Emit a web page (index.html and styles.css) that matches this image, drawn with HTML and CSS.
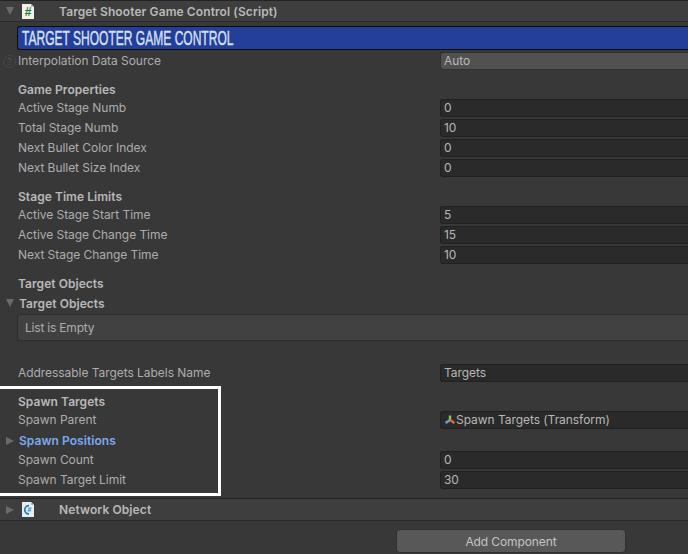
FILE: index.html
```html
<!DOCTYPE html>
<html lang="en">
<head>
  <meta charset="UTF-8">
  <title>Inspector</title>
  <link rel="stylesheet" href="styles.css">
</head>
<body>
  <div class="inspector">
    <div class="comp-header">
      <span class="tri tri-down"></span>
      <svg class="comp-icon" width="14" height="15" viewBox="0 0 14 15">
        <path d="M1 0h9l3 3v12H1z" fill="#f1f1ec"/>
        <path d="M10 0l3 3h-3z" fill="#b9b9b4"/>
        <text x="7" y="12" text-anchor="middle" class="icon-hash">#</text>
      </svg>
      <span class="comp-title">Target Shooter Game Control (Script)</span>
    </div>

    <div class="banner"><span class="banner-text">TARGET SHOOTER GAME CONTROL</span></div>

    <div class="row row-help">
      <span class="help">?</span>
      <span class="label">Interpolation Data Source</span>
      <span class="field field-drop">Auto</span>
    </div>

    <h3 class="heading">Game Properties</h3>
    <div class="row"><span class="label">Active Stage Numb</span><span class="field">0</span></div>
    <div class="row"><span class="label">Total Stage Numb</span><span class="field">10</span></div>
    <div class="row"><span class="label">Next Bullet Color Index</span><span class="field">0</span></div>
    <div class="row"><span class="label">Next Bullet Size Index</span><span class="field">0</span></div>

    <h3 class="heading">Stage Time Limits</h3>
    <div class="row"><span class="label">Active Stage Start Time</span><span class="field">5</span></div>
    <div class="row"><span class="label">Active Stage Change Time</span><span class="field">15</span></div>
    <div class="row"><span class="label">Next Stage Change Time</span><span class="field">10</span></div>

    <h3 class="heading">Target Objects</h3>
    <div class="foldout foldout-list">
      <span class="tri tri-down"></span>
      <span>Target Objects</span>
    </div>
    <div class="list-box">List is Empty</div>

    <div class="row row-address"><span class="label">Addressable Targets Labels Name</span><span class="field">Targets</span></div>

    <h3 class="heading">Spawn Targets</h3>
    <div class="row">
      <span class="label">Spawn Parent</span>
      <span class="field field-object">
        <svg width="12" height="12" viewBox="0 0 12 12">
          <path d="M6 1.5V6" stroke="#8fc63f" stroke-width="2.4"/>
          <path d="M6 6L1.6 9" stroke="#5aa9dc" stroke-width="2.4"/>
          <path d="M6 6l4.4 3" stroke="#e4683a" stroke-width="2.4"/>
        </svg>Spawn Targets (Transform)
      </span>
    </div>
    <div class="foldout foldout-link">
      <span class="tri tri-right"></span>
      <span>Spawn Positions</span>
    </div>
    <div class="row"><span class="label">Spawn Count</span><span class="field">0</span></div>
    <div class="row"><span class="label">Spawn Target Limit</span><span class="field">30</span></div>

    <div class="comp-header comp-header-net">
      <span class="tri tri-right"></span>
      <svg class="comp-icon" width="14" height="15" viewBox="0 0 14 15">
        <path d="M1 0h9l3 3v12H1z" fill="#e9edf0"/>
        <path d="M10 0l3 3h-3z" fill="#b9b9b4"/>
        <path d="M8 3.6A4.2 4.2 0 1 0 8 12" fill="none" stroke="#1f7fc0" stroke-width="1.8"/>
        <text x="8.4" y="10.4" text-anchor="middle" class="icon-sharp">#</text>
      </svg>
      <span class="comp-title">Network Object</span>
    </div>

    <div class="actions">
      <button class="add-btn">Add Component</button>
    </div>

    <div class="callout"></div>
  </div>
</body>
</html>
```

FILE: styles.css
```css
html, body {
  margin: 0;
  padding: 0;
  height: 100%;
  overflow: hidden;
}
body {
  background: #383838;
  color: #adadad;
  font-family: Inter, "Liberation Sans", sans-serif;
  font-size: 12px;
  letter-spacing: -0.05px;
}
.inspector {
  position: relative;
  width: 688px;
  height: 554px;
  overflow: hidden;
}
.comp-header {
  display: flex;
  align-items: center;
  height: 20px;
  background: #3e3e3e;
  border-top: 1px solid #232323;
  border-bottom: 1px solid #2a2a2a;
}
.comp-header-net {
  height: 21px;
  margin-top: 8px;
}
.comp-icon {
  margin-left: 7px;
}
.comp-title {
  margin-left: 24px;
  font-weight: 600;
  letter-spacing: 0.1px;
  color: #b8b8b8;
}
.tri {
  flex: none;
  width: 0;
  height: 0;
  margin-left: 6px;
}
.tri-down {
  border-left: 4.5px solid transparent;
  border-right: 4.5px solid transparent;
  border-top: 8px solid #6a6a6a;
}
.tri-right {
  border-top: 4.5px solid transparent;
  border-bottom: 4.5px solid transparent;
  border-left: 8px solid #6a6a6a;
}
.banner {
  margin: 4px 0 0 17px;
  height: 22px;
  padding-left: 4px;
  line-height: 22px;
  background: #243f9a;
  border: 1px solid #0c0c0c;
  border-right: 0;
  border-radius: 3px 0 0 3px;
  color: #d8e0f4;
  font-family: "Liberation Sans", sans-serif;
  font-size: 19.5px;
  letter-spacing: 0;
}
.banner-text {
  display: inline-block;
  transform: scaleX(0.617);
  transform-origin: left center;
  white-space: nowrap;
  -webkit-text-stroke: 0.4px #d8e0f4;
}
.row {
  display: flex;
  align-items: center;
  height: 20px;
  padding-left: 18px;
}
.row-help {
  position: relative;
  margin-top: 1px;
}
.help {
  position: absolute;
  left: 3px;
  top: 4px;
  width: 11px;
  height: 11px;
  border: 1px solid #474747;
  border-radius: 50%;
  color: #565656;
  font-size: 9px;
  line-height: 11px;
  text-align: center;
}
.label {
  width: 422px;
  flex: none;
  padding-bottom: 1px;
}
.field {
  flex: 1;
  height: 18px;
  line-height: 16px;
  padding-left: 3px;
  background: #2a2a2a;
  border: 1px solid #212121;
  border-right: 0;
  border-radius: 3px 0 0 3px;
  box-sizing: border-box;
  color: #b8b8b8;
}
.field-drop {
  background: #515151;
  border-color: #303030;
}
.field-object {
  display: flex;
  align-items: center;
  gap: 0;
}
.heading {
  margin: 0;
  height: 17px;
  line-height: 17px;
  padding-left: 18px;
  font-size: 12px;
  font-weight: 600;
  letter-spacing: 0.05px;
  color: #b8b8b8;
}
.row + .heading {
  margin-top: 10px;
}
.foldout {
  display: flex;
  align-items: center;
  gap: 5px;
  font-weight: 600;
  letter-spacing: 0.05px;
  color: #b8b8b8;
}
.foldout .tri {
  margin-left: 6px;
}
.foldout-list {
  height: 20px;
  margin-top: 1px;
}
.foldout-link {
  height: 20px;
  padding-top: 1px;
  box-sizing: border-box;
  color: #7baaf0;
}
.list-box {
  margin: 1px 0 0 17px;
  height: 27px;
  padding-left: 7px;
  line-height: 25px;
  box-sizing: border-box;
  letter-spacing: -0.2px;
  background: #414141;
  border: 1px solid #2e2e2e;
  border-right: 0;
  border-radius: 3px 0 0 3px;
}
.row-address {
  margin-top: 22px;
}
.actions {
  display: flex;
  padding: 8px 0 0 396px;
}
.add-btn {
  width: 230px;
  height: 24px;
  padding: 0;
  background: #585858;
  border: 1px solid #303030;
  border-radius: 4px;
  color: #c4c4c4;
  font: 12px Inter, "Liberation Sans", sans-serif;
  letter-spacing: -0.1px;
}
.callout {
  position: absolute;
  left: -4px;
  top: 386px;
  width: 219px;
  height: 104px;
  border: 3px solid #fff;
}
.icon-hash {
  font: bold 12px "Liberation Sans", sans-serif;
  fill: #1f7a2c;
}
.icon-sharp {
  font: bold 7px "Liberation Sans", sans-serif;
  fill: #1f7fc0;
}
```
